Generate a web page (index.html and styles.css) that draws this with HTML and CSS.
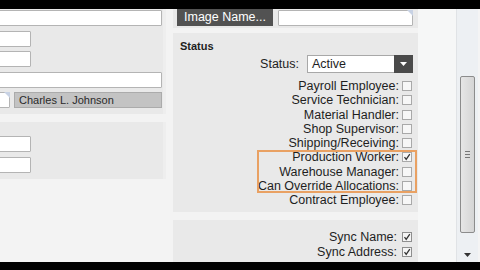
FILE: index.html
```html
<!DOCTYPE html>
<html>
<head>
<meta charset="utf-8">
<link rel="stylesheet" href="styles.css">
</head>
<body>
<div class="topbar"></div>
<div class="main">
  <div class="left">
    <div class="lpanel lp1">
      <div class="inp w-wide"></div>
      <div class="inp w-short"></div>
      <div class="inp w-short"></div>
      <div class="inp w-wide"></div>
      <div class="row5">
        <div class="inp w-tiny"><span class="fold"></span></div>
        <div class="ro">Charles L. Johnson</div>
      </div>
    </div>
    <div class="lpanel lp2">
      <div class="inp w-short"></div>
      <div class="inp w-short"></div>
    </div>
  </div>
  <div class="mid">
    <div class="header">
      <div class="btn">Image Name...</div>
      <div class="inp w-img"><span class="fold"></span></div>
    </div>
    <div class="panel status">
      <div class="heading">Status</div>
      <div class="srow">
        <span class="lbl">Status:</span>
        <div class="select"><span class="sval">Active</span><span class="sbtn"><svg width="7" height="4" viewBox="0 0 7 4"><polygon points="0,0 7,0 3.5,4" fill="#fff"/></svg></span></div>
      </div>
      <div class="checks">
        <div class="crow"><span class="lbl">Payroll Employee:</span><span class="cb"></span></div>
        <div class="crow"><span class="lbl">Service Technician:</span><span class="cb"></span></div>
        <div class="crow"><span class="lbl">Material Handler:</span><span class="cb"></span></div>
        <div class="crow"><span class="lbl">Shop Supervisor:</span><span class="cb"></span></div>
        <div class="crow"><span class="lbl">Shipping/Receiving:</span><span class="cb"></span></div>
        <div class="hl">
          <div class="crow"><span class="lbl">Production Worker:</span><span class="cb"><svg width="8" height="8" viewBox="0 0 8 8"><polyline points="1.5,4.2 3.2,6.3 6.8,1.2" fill="none" stroke="#333" stroke-width="1.3"/></svg></span></div>
          <div class="crow"><span class="lbl">Warehouse Manager:</span><span class="cb"></span></div>
          <div class="crow"><span class="lbl">Can Override Allocations:</span><span class="cb"></span></div>
        </div>
        <div class="crow"><span class="lbl">Contract Employee:</span><span class="cb"></span></div>
      </div>
    </div>
    <div class="panel sync">
      <div class="yrow"><span class="lbl">Sync Name:</span><span class="cb"><svg width="8" height="8" viewBox="0 0 8 8"><polyline points="1.5,4.2 3.2,6.3 6.8,1.2" fill="none" stroke="#333" stroke-width="1.3"/></svg></span></div>
      <div class="yrow"><span class="lbl">Sync Address:</span><span class="cb"><svg width="8" height="8" viewBox="0 0 8 8"><polyline points="1.5,4.2 3.2,6.3 6.8,1.2" fill="none" stroke="#333" stroke-width="1.3"/></svg></span></div>
    </div>
  </div>
  <div class="filler"></div>
  <div class="scrollbar">
    <div class="thumb"><span class="grip"></span><span class="grip"></span><span class="grip"></span></div>
    <div class="arrow"><svg width="7" height="4" viewBox="0 0 7 4"><polygon points="0,0 7,0 3.5,4" fill="#333"/></svg></div>
  </div>
  <div class="edge"></div>
</div>
<div class="bottombar"></div>
</body>
</html>
```

FILE: styles.css
```css
* { box-sizing: border-box; }
html, body { margin: 0; padding: 0; }
body {
  width: 480px;
  height: 270px;
  overflow: hidden;
  background: #f3f3f3;
  font-family: "Liberation Sans", Arial, sans-serif;
  font-size: 12.5px;
  color: #1e1e1e;
  display: flex;
  flex-direction: column;
}
.topbar { height: 9px; background: #000; flex: none; }
.bottombar { height: 8px; background: #000; flex: none; }
.main { height: 253px; display: flex; flex: none; }

.left { width: 166px; display: flex; flex-direction: column; gap: 8px; flex: none; }
.lpanel { background: #e9e9e9; display: flex; flex-direction: column; border-right: 3px solid #eeeeee; }
.lp1 { height: 105px; padding-top: 1px; gap: 4.5px; }
.lp2 { height: 57px; padding-top: 14px; gap: 5px; }

.inp {
  height: 16px;
  background: #fff;
  border: 1px solid #b4b4b4;
  border-radius: 1px;
  position: relative;
  flex: none;
}
.w-wide { width: 164px; margin-left: -2px; }
.w-short { width: 33px; margin-left: -2px; }
.w-tiny { width: 12px; margin-left: -2px; }
.w-img { width: 135px; margin-left: 5px; margin-top: 1px; }
.fold {
  position: absolute;
  top: -1px; right: -1px;
  width: 0; height: 0;
  border-top: 6px solid #c8d2e4;
  border-left: 6px solid transparent;
}
.row5 { display: flex; gap: 4px; }
.ro {
  width: 148px;
  height: 16px;
  background: #c3c3c3;
  border: 1px solid #ababab;
  font-size: 11px;
  line-height: 14px;
  padding-left: 4px;
  color: #2a2a2a;
}

.mid { width: 245px; margin-left: 7px; display: flex; flex-direction: column; flex: none; }
.header { height: 19px; background: #e9e9e9; display: flex; align-items: flex-start; flex: none; }
.btn {
  margin-left: 4px;
  width: 96px;
  height: 17px;
  background: #525252;
  color: #fff;
  font-size: 12.5px;
  line-height: 17px;
  text-align: center;
}
.panel { background: #e9e9e9; flex: none; }
.status { margin-top: 5px; height: 179px; padding-top: 6px; }
.heading { font-weight: bold; font-size: 11px; line-height: 14px; padding-left: 7px; }
.srow { display: flex; justify-content: flex-end; align-items: center; gap: 8px; padding-right: 5px; margin-top: 2px; height: 18px; }
.select {
  width: 106px;
  height: 18px;
  background: #fff;
  border: 1px solid #a8a8a8;
  display: flex;
  align-items: center;
}
.sval { flex: 1; padding-left: 4px; }
.sbtn { width: 19px; height: 18px; margin: -1px -1px -1px 0; background: #4a4a4a; display: flex; align-items: center; justify-content: center; }

.checks { margin-top: 6px; display: flex; flex-direction: column; }
.crow { height: 14.25px; display: flex; justify-content: flex-end; align-items: center; gap: 3px; padding-right: 6px; line-height: 14px; }
.hl { margin-left: 84px; margin-right: 1px; outline: 2px solid #e9a163; outline-offset: -2px; }
.hl .crow { padding-right: 5px; }
.cb {
  width: 10px;
  height: 10px;
  border: 1px solid #a9a9a9;
  background: #f7f7f7;
  display: flex;
  align-items: center;
  justify-content: center;
  flex: none;
}

.sync { margin-top: 8px; height: 42px; padding-top: 9px; }
.yrow { height: 15px; display: flex; justify-content: flex-end; align-items: center; gap: 5px; padding-right: 6px; }
.yrow .cb { border-color: #8e8e8e; background: #f4f4f4; }

.filler { width: 38px; background: #f6f7f7; flex: none; }
.scrollbar {
  width: 22px;
  background: #edf0f3;
  border-left: 1px solid #e0e3e6;
  display: flex;
  flex-direction: column;
  align-items: center;
  flex: none;
}
.thumb {
  margin-top: 67px;
  width: 15px;
  height: 157px;
  border: 1px solid #8c8c8c;
  border-radius: 2px;
  background: linear-gradient(to right, #e6e6e6, #d5d5d5);
  display: flex;
  flex-direction: column;
  align-items: center;
  justify-content: center;
  gap: 2px;
}
.grip { width: 5px; height: 1px; background: #777; }
.arrow { margin-top: auto; margin-bottom: 5px; height: 4px; display: flex; }
.edge { width: 2px; background: #f4f4f4; flex: none; }
```
